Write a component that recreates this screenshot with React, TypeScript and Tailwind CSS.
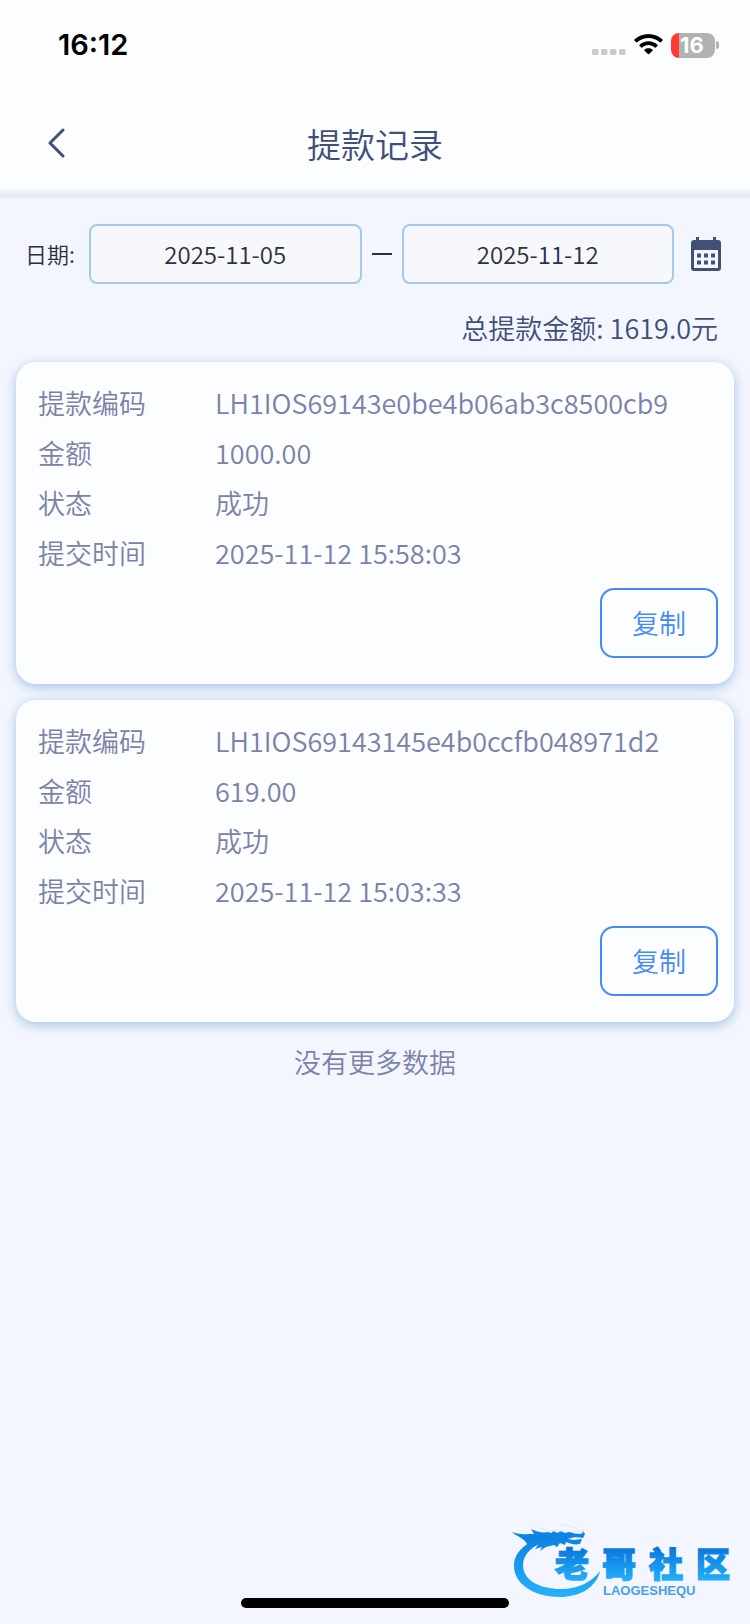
import React, { useState } from 'react';

interface WithdrawRecord {
  code: string;
  amount: string;
  status: string;
  time: string;
}

const records: WithdrawRecord[] = [
  {
    code: 'LH1IOS69143e0be4b06ab3c8500cb9',
    amount: '1000.00',
    status: '成功',
    time: '2025-11-12 15:58:03',
  },
  {
    code: 'LH1IOS69143145e4b0ccfb048971d2',
    amount: '619.00',
    status: '成功',
    time: '2025-11-12 15:03:33',
  },
];

const StatusBar = () => (
  <div className="flex h-[90px] items-center justify-between pl-[58px] pr-[31px] font-['Inter',sans-serif]">
    <span className="text-[29px] leading-8 font-semibold text-black">16:12</span>
    <div className="flex items-center gap-2">
      {/* No signal dots */}
      <svg className="h-6 w-[34px]" viewBox="0 0 34 24" fill="#c9cacd">
        <rect x="0" y="16" width="6.500" height="6" rx="1.500" />
        <rect x="9" y="16" width="6.500" height="6" rx="1.500" />
        <rect x="18" y="16" width="6.500" height="6" rx="1.500" />
        <rect x="27" y="16" width="6.500" height="6" rx="1.500" />
      </svg>
      {/* Wifi */}
      <svg className="h-6 w-[29px]" viewBox="0 0 29 24" fill="#000">
        <path d="M14.5 1C9 1 4 3.1.4 6.6c-.3.3-.3.7 0 1l1.700 1.700c.3.3.7.3 1 0C6.100 6.500 10.100 4.900 14.500 4.900s8.400 1.600 11.400 4.400c.3.3.7.3 1 0l1.700-1.700c.3-.3.3-.7 0-1C25 3.100 20 1 14.500 1z" />
        <path d="M14.5 8.300c-3.500 0-6.600 1.300-9 3.500-.3.3-.3.7 0 1l1.700 1.700c.3.3.7.3 1 0 1.700-1.500 3.900-2.400 6.300-2.400s4.600.9 6.300 2.400c.3.3.7.3 1 0l1.700-1.700c.3-.3.3-.7 0-1-2.400-2.200-5.500-3.500-9-3.500z" />
        <path d="M14.5 15.300c-1.500 0-2.900.5-4 1.400-.3.3-.3.7 0 1l3.500 3.400c.3.3.7.3 1 0l3.500-3.400c.3-.3.3-.7 0-1-1.100-.9-2.500-1.400-4-1.400z" />
      </svg>
      {/* Battery */}
      <div className="flex items-center gap-px">
        <div className="flex h-[25px] w-11 items-center justify-center rounded-lg bg-linear-to-r from-[#ff3b30] from-18% to-[#b1b2b4] to-18% pr-[2px] text-[22px] leading-6 font-bold text-white">
          16
        </div>
        <div className="h-2 w-[3px] rounded-r-full bg-[#b1b2b4]" />
      </div>
    </div>
  </div>
);

const CalendarIcon = () => (
  <svg className="h-[34px] w-[30px]" viewBox="0 0 30 34" fill="#435076">
    <rect x="5" y="0" width="3" height="6" />
    <rect x="22" y="0" width="3" height="6" />
    <path
      fillRule="evenodd"
      d="M3 3h24a3 3 0 0 1 3 3v25a3 3 0 0 1-3 3H3a3 3 0 0 1-3-3V6a3 3 0 0 1 3-3zM3 13v18h24V13z"
    />
    <path d="M6 16.500h4v4H6zM13 16.500h4v4h-4zM20 16.500h4v4h-4zM6 23.500h4v4H6zM13 23.500h4v4h-4zM20 23.500h4v4h-4z" />
  </svg>
);

const RecordRow = ({ label, value }: { label: string; value: string }) => (
  <div className="flex h-[50px] items-center">
    <dt className="w-[177px] shrink-0">{label}</dt>
    <dd>{value}</dd>
  </div>
);

const RecordCard = ({ record }: { record: WithdrawRecord }) => (
  <section className="rounded-[20px] bg-[#fcfdff] pt-4 pr-4 pb-[26px] pl-[22px] shadow-[0_3px_12px_rgba(110,160,205,0.6)]">
    <dl className="text-[27px] leading-10 text-[#7b82a8]">
      <RecordRow label="提款编码" value={record.code} />
      <RecordRow label="金额" value={record.amount} />
      <RecordRow label="状态" value={record.status} />
      <RecordRow label="提交时间" value={record.time} />
    </dl>
    <div className="mt-[10px] flex justify-end">
      <button
        onClick={() => navigator.clipboard?.writeText(record.code)}
        className="h-[70px] w-[118px] cursor-pointer rounded-[14px] border-2 border-[#4489fa] text-[27px] leading-10 text-[#4489fa]"
      >
        复制
      </button>
    </div>
  </section>
);

const CommunityLogo = () => (
  <svg className="h-20 w-[226px]" viewBox="0 0 226 80">
    <defs>
      <linearGradient id="ring" x1="0" y1="0" x2="0" y2="76" gradientUnits="userSpaceOnUse">
        <stop offset="0.2" stopColor="#0d84e4" />
        <stop offset="1" stopColor="#27b4fc" />
      </linearGradient>
      <linearGradient id="word" x1="0" y1="24" x2="0" y2="57" gradientUnits="userSpaceOnUse">
        <stop offset="0" stopColor="#0a77dc" />
        <stop offset="1" stopColor="#22b0fb" />
      </linearGradient>
    </defs>
    {/* Dragon body */}
    <path
      fill="url(#ring)"
      d="M32 12C14 18 2 28 2 42c0 18 20 31 46 31 19 0 36-9 40-26-8 11-22 18-39 18-22 0-38-9-38-24 0-11 10-20 25-25z"
    />
    {/* Dragon head and whiskers */}
    <path
      fill="url(#ring)"
      d="M0 8c8 3 14 2 22 2l-3-5c6 3 12 4 17 3l3 1 3-2 3 2 4-2 4 2 4-1c5 1 9 3 14 1l-1-3 3 4-2 4c-6-1-10-1-15 1l6 1 8-1-2 5c-5 1-9 0-14-2l-1 3-5-2-3 4-3-2-8 2-6 4 2-4-7 2 3-4-9 3C14 14 5 13 0 8z"
    />
    <path fill="none" stroke="#dbe9fa" strokeWidth="1" d="M26 3c8 4 18 4 26 4M48 1c9 0 18 3 20 7" />
    <g
      fill="url(#word)"
      stroke="url(#word)"
      strokeWidth="1.500"
      fontFamily="'Noto Sans CJK SC', sans-serif"
      fontWeight="900"
      fontSize="34"
    >
      <text x="43" y="53">老</text>
      <text x="90" y="53">哥</text>
      <text x="137" y="53">社</text>
      <text x="184" y="53">区</text>
    </g>
    <text x="91" y="71" fill="#4a9fe6" fontFamily="'Liberation Sans', sans-serif" fontWeight="700" fontSize="13">
      LAOGESHEQU
    </text>
  </svg>
);

export default function App() {
  const [startDate, setStartDate] = useState('2025-11-05');
  const [endDate, setEndDate] = useState('2025-11-12');

  return (
    <div className="relative flex min-h-screen flex-col bg-[#f3f6fe] font-['Noto_Sans_CJK_SC',sans-serif] font-[350]">
      <header className="bg-[#fcfdff]">
        <StatusBar />
        <div className="grid h-[98px] grid-cols-[1fr_auto_1fr] items-center px-[42px] pt-[10px]">
          <button aria-label="返回" className="flex h-11 w-7 cursor-pointer items-center justify-center">
            <svg className="h-8 w-5" viewBox="0 0 20 32" fill="none" stroke="#414e78" strokeWidth="3">
              <path d="M17 2L4 15l13 13" strokeLinecap="round" strokeLinejoin="round" />
            </svg>
          </button>
          <h1 className="text-[34px] leading-[50px] text-[#414e78]">提款记录</h1>
        </div>
        <div className="h-2 bg-linear-to-b from-[#fcfdff] to-[#e0e8f2]" />
        <div className="h-1 bg-linear-to-b from-[#e0e8f2] to-[#f3f6fe]" />
      </header>

      <main className="flex flex-col px-4">
        {/* Date range filter */}
        <div className="mt-6 flex items-center pr-[13px] pl-[9px] text-[#2c3040]">
          <label htmlFor="start-date" className="w-16 shrink-0 pb-[2px] text-[22px] leading-8">
            日期:
          </label>
          <input
            id="start-date"
            type="text"
            value={startDate}
            onChange={(e) => setStartDate(e.target.value)}
            className="h-[60px] min-w-0 flex-1 rounded-lg border-2 border-[#a5c9ea] bg-[#f7f8fc] pb-[2px] text-center text-[24px] leading-8"
          />
          <span className="mx-[10px] h-[2px] w-5 shrink-0 bg-[#2c3040]" />
          <input
            aria-label="结束日期"
            type="text"
            value={endDate}
            onChange={(e) => setEndDate(e.target.value)}
            className="h-[60px] min-w-0 flex-1 rounded-lg border-2 border-[#a5c9ea] bg-[#f7f8fc] pb-[2px] text-center text-[24px] leading-8"
          />
          <button aria-label="选择日期" className="ml-[17px] shrink-0 cursor-pointer">
            <CalendarIcon />
          </button>
        </div>

        <p className="mt-6 pr-4 text-right text-[27px] leading-10 text-[#414e78]">总提款金额: 1619.0元</p>

        <div className="mt-[14px] flex flex-col gap-4">
          {records.map((record) => (
            <RecordCard key={record.code} record={record} />
          ))}
        </div>

        <p className="mt-5 text-center text-[27px] leading-10 text-[#7b82a8]">没有更多数据</p>
      </main>

      {/* Watermark and home indicator float over the page */}
      <div className="pointer-events-none absolute right-3 bottom-5">
        <CommunityLogo />
      </div>
      <div className="absolute bottom-4 left-1/2 h-[10px] w-[268px] -translate-x-1/2 rounded-full bg-black" />
    </div>
  );
}
